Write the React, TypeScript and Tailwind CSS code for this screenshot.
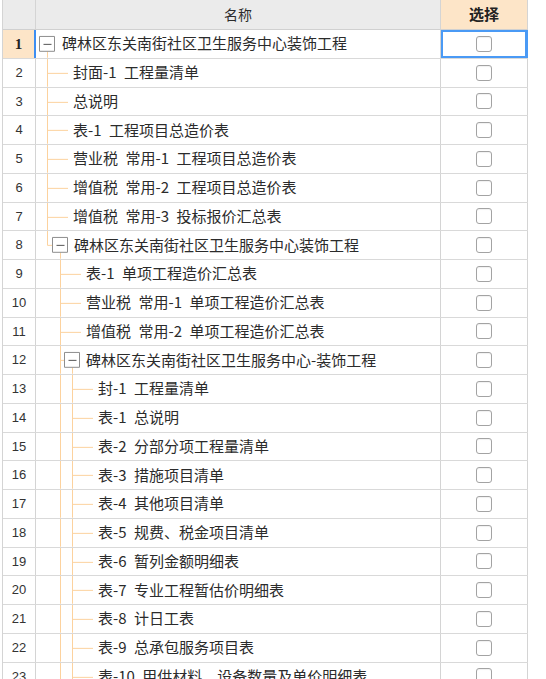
import React from 'react';

type Row = {
  text: string;
  parent: number; // -1 for the root
  box?: boolean; // has an expand/collapse box
  last?: boolean; // last child of its parent
  pass?: number[]; // ancestor lines running through this row
};

// x of each level's vertical guide, relative to the name cell
const V = [11, 24, 36];
const LINE = '#fcd29e';

const rows: Row[] = [
  { text: '碑林区东关南街社区卫生服务中心装饰工程', parent: -1, box: true },
  { text: '封面-1 工程量清单', parent: 0 },
  { text: '总说明', parent: 0 },
  { text: '表-1 工程项目总造价表', parent: 0 },
  { text: '营业税 常用-1 工程项目总造价表', parent: 0 },
  { text: '增值税 常用-2 工程项目总造价表', parent: 0 },
  { text: '增值税 常用-3 投标报价汇总表', parent: 0 },
  { text: '碑林区东关南街社区卫生服务中心装饰工程', parent: 0, box: true, last: true },
  { text: '表-1 单项工程造价汇总表', parent: 1 },
  { text: '营业税 常用-1 单项工程造价汇总表', parent: 1 },
  { text: '增值税 常用-2 单项工程造价汇总表', parent: 1 },
  { text: '碑林区东关南街社区卫生服务中心-装饰工程', parent: 1, box: true },
  { text: '封-1 工程量清单', parent: 2, pass: [1] },
  { text: '表-1 总说明', parent: 2, pass: [1] },
  { text: '表-2 分部分项工程量清单', parent: 2, pass: [1] },
  { text: '表-3 措施项目清单', parent: 2, pass: [1] },
  { text: '表-4 其他项目清单', parent: 2, pass: [1] },
  { text: '表-5 规费、税金项目清单', parent: 2, pass: [1] },
  { text: '表-6 暂列金额明细表', parent: 2, pass: [1] },
  { text: '表-7 专业工程暂估价明细表', parent: 2, pass: [1] },
  { text: '表-8 计日工表', parent: 2, pass: [1] },
  { text: '表-9 总承包服务项目表', parent: 2, pass: [1] },
  { text: '表-10 甲供材料、设备数量及单价明细表', parent: 2, pass: [1] },
];

function Guides({ row }: { row: Row }) {
  const H = 28;
  const mid = 14.5;
  const depth = row.box ? row.parent + 1 : -1;
  const width = row.box ? V[depth] + (depth === 0 ? 15 : 14) : V[row.parent] + 26;
  const p = row.parent;

  return (
    <svg
      width={width}
      height="100%"
      viewBox={`0 0 ${width} ${H}`}
      preserveAspectRatio="none"
      className="shrink-0"
    >
      {(row.pass ?? []).map((a) => (
        <line key={a} x1={V[a] + 0.5} y1={0} x2={V[a] + 0.5} y2={H} stroke={LINE} vectorEffect="non-scaling-stroke" />
      ))}
      {p >= 0 && (
        <>
          <line x1={V[p] + 0.5} y1={0} x2={V[p] + 0.5} y2={row.last ? mid : H} stroke={LINE} vectorEffect="non-scaling-stroke" />
          <line
            x1={V[p] + 0.5}
            y1={mid}
            x2={row.box ? V[depth] - 7.5 : V[p] + 21}
            y2={mid}
            stroke={LINE}
            vectorEffect="non-scaling-stroke"
          />
        </>
      )}
      {row.box && (
        <>
          <line x1={V[depth] + 0.5} y1={21.5} x2={V[depth] + 0.5} y2={H} stroke={LINE} vectorEffect="non-scaling-stroke" />
          <rect x={V[depth] - 7.5} y={6.5} width={15} height={15} fill="#fff" stroke="#8e8e8e" vectorEffect="non-scaling-stroke" />
          <line x1={V[depth] - 3.5} y1={mid} x2={V[depth] + 4.5} y2={mid} stroke="#555" vectorEffect="non-scaling-stroke" />
        </>
      )}
    </svg>
  );
}

export default function App() {
  return (
    <div className="h-screen overflow-hidden bg-white text-[#2b2b2b]" style={{ fontFamily: '"Noto Sans CJK SC", "Liberation Sans", sans-serif' }}>
      <div className="ml-[2px] w-[526px] border-l border-[#d4d4d4]">
        {/* header */}
        <div className="flex h-[30px] border-b border-[#d0d0d0]">
          <div className="w-[33px] border-r border-[#d4d4d4] bg-[#ebebeb]" />
          <div className="flex w-[405px] items-center justify-center border-r border-[#d4d4d4] bg-[#ebebeb] text-[14px]">
            名称
          </div>
          <div className="flex w-[87px] items-center justify-center border-r border-[#d4d4d4] bg-[#fde5c8] text-[15px] font-bold text-[#222]">
            选择
          </div>
        </div>

        {rows.map((row, i) => {
          const active = i === 0;
          return (
            <div key={i} className="flex h-[28.75px] border-b border-[#d9d9d9]">
              <div
                className={
                  active
                    ? 'flex w-[33px] items-center justify-center border-r-2 border-[#3d8ef2] bg-[#fde5c8] text-[15px] font-bold text-[#222] [font-family:"Liberation_Serif",serif]'
                    : 'flex w-[33px] items-center justify-center border-r border-[#d4d4d4] text-[13px] text-[#333] [font-family:"Liberation_Sans",sans-serif]'
                }
              >
                {i + 1}
              </div>
              <div className="flex w-[405px] items-stretch overflow-hidden whitespace-pre border-r border-[#d4d4d4] text-[15px]">
                <Guides row={row} />
                <span className="self-center pb-[2px] leading-none">{row.text.replace(/ /g, '\u2002')}</span>
              </div>
              <div
                className={
                  active
                    ? 'flex w-[87px] items-center justify-center border-r border-[#4a9af5] shadow-[inset_0_0_0_2px_#4a9af5]'
                    : 'flex w-[87px] items-center justify-center border-r border-[#d4d4d4]'
                }
              >
                <div className="h-[16px] w-[16px] rounded-[3px] border border-[#a3a3a3] bg-white shadow-[inset_0_1px_1px_rgba(0,0,0,0.06)]" />
              </div>
            </div>
          );
        })}
      </div>
    </div>
  );
}
